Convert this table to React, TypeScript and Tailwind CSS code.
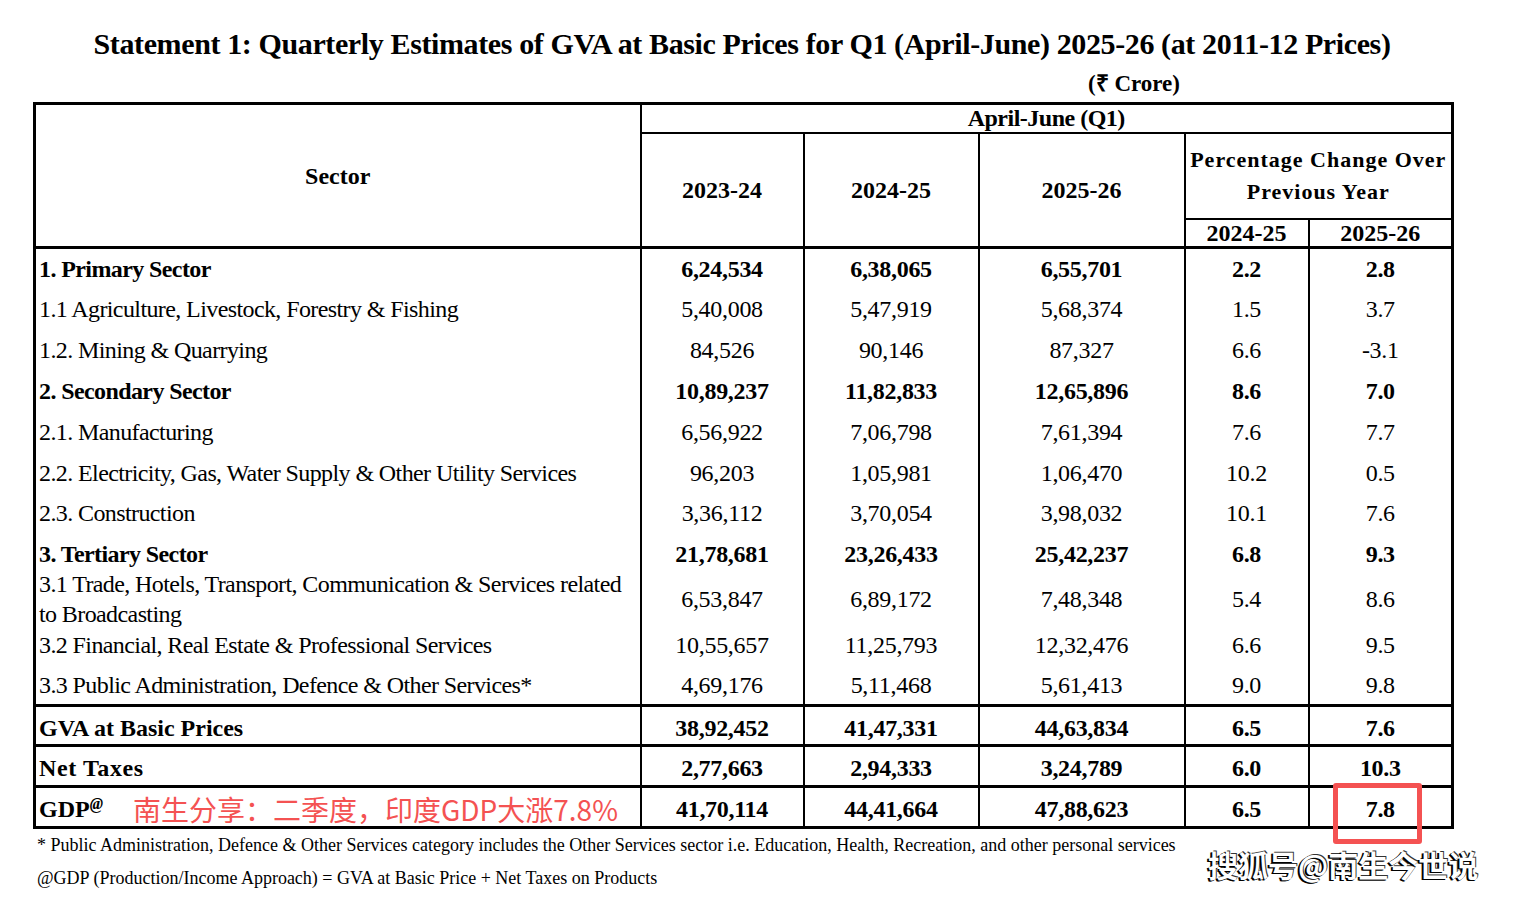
import React from "react";

type Row = {
  label: React.ReactNode;
  bold?: boolean;
  values: string[];
  h: string;
};

const rows: Row[] = [
  { label: "1. Primary Sector", bold: true, values: ["6,24,534", "6,38,065", "6,55,701", "2.2", "2.8"], h: "h-[41px]" },
  { label: "1.1 Agriculture, Livestock, Forestry & Fishing", values: ["5,40,008", "5,47,919", "5,68,374", "1.5", "3.7"], h: "h-[41px]" },
  { label: "1.2. Mining & Quarrying", values: ["84,526", "90,146", "87,327", "6.6", "-3.1"], h: "h-[41px]" },
  { label: "2. Secondary Sector", bold: true, values: ["10,89,237", "11,82,833", "12,65,896", "8.6", "7.0"], h: "h-[41px]" },
  { label: "2.1. Manufacturing", values: ["6,56,922", "7,06,798", "7,61,394", "7.6", "7.7"], h: "h-[41px]" },
  { label: "2.2. Electricity, Gas, Water Supply & Other Utility Services", values: ["96,203", "1,05,981", "1,06,470", "10.2", "0.5"], h: "h-[40px]" },
  { label: "2.3. Construction", values: ["3,36,112", "3,70,054", "3,98,032", "10.1", "7.6"], h: "h-[41px]" },
  { label: "3. Tertiary Sector", bold: true, values: ["21,78,681", "23,26,433", "25,42,237", "6.8", "9.3"], h: "h-[40px]" },
  {
    label: (
      <div className="-my-[5px] leading-[30px]">
        3.1 Trade, Hotels, Transport, Communication &amp; Services related
        <br />
        to Broadcasting
      </div>
    ),
    values: ["6,53,847", "6,89,172", "7,48,348", "5.4", "8.6"],
    h: "h-[50px]",
  },
  { label: "3.2 Financial, Real Estate & Professional Services", values: ["10,55,657", "11,25,793", "12,32,476", "6.6", "9.5"], h: "h-[42px]" },
  { label: "3.3 Public Administration, Defence & Other Services*", values: ["4,69,176", "5,11,468", "5,61,413", "9.0", "9.8"], h: "h-[40px]" },
];

const totals: Row[] = [
  { label: "GVA at Basic Prices", bold: true, values: ["38,92,452", "41,47,331", "44,63,834", "6.5", "7.6"], h: "h-[40px]" },
  { label: "Net Taxes", bold: true, values: ["2,77,663", "2,94,333", "3,24,789", "6.0", "10.3"], h: "h-[41px]" },
];

const serif = "font-['Liberation_Serif','Times_New_Roman',serif]";

export default function App() {
  return (
    <div className={`min-h-[898px] w-full bg-white text-black ${serif}`}>
      <div className="relative ml-[33px] w-[1418px]">
        <h1 className="pt-[26px] text-center text-[30px] leading-[36px] font-bold tracking-[-0.38px]">
          Statement 1: Quarterly Estimates of GVA at Basic Prices for Q1 (April-June) 2025-26 (at 2011-12 Prices)
        </h1>
        <div className="mt-[7px] flex h-[30px] items-center justify-end pr-[271px] text-[23px] font-bold">
          (₹ Crore)
        </div>

        <table className="mt-[3px] w-[1418px] table-fixed border-collapse border-[3px] border-black">
          <colgroup>
            <col className="w-[606px]" />
            <col className="w-[163px]" />
            <col className="w-[175px]" />
            <col className="w-[206px]" />
            <col className="w-[124px]" />
            <col className="w-[144px]" />
          </colgroup>
          <thead className="text-[24px] font-bold">
            <tr className="h-[29px]">
              <th rowSpan={3} className="border-r-2 border-b-[3px] border-black font-bold">
                Sector
              </th>
              <th colSpan={5} className="border-b-2 border-black font-bold leading-[26px] tracking-[-0.5px]">
                April-June (Q1)
              </th>
            </tr>
            <tr className="h-[86px]">
              <th rowSpan={2} className="border-r-2 border-b-[3px] border-black font-bold">2023-24</th>
              <th rowSpan={2} className="border-r-2 border-b-[3px] border-black font-bold">2024-25</th>
              <th rowSpan={2} className="border-r-2 border-b-[3px] border-black font-bold">2025-26</th>
              <th colSpan={2} className="border-b-2 border-black text-[22px] font-bold leading-[32px] tracking-[1px]">
                Percentage Change Over
                <br />
                Previous Year
              </th>
            </tr>
            <tr className="h-[29px]">
              <th className="border-r-2 border-b-[3px] border-black font-bold leading-[26px]">2024-25</th>
              <th className="border-b-[3px] border-black font-bold leading-[26px]">2025-26</th>
            </tr>
          </thead>
          <tbody className="text-[24px] leading-[30px]">
            {rows.map((r, i) => (
              <tr key={i} className={r.h}>
                <td className={`border-r-2 border-black pl-[3px] tracking-[-0.6px] ${r.bold ? "font-bold" : ""}`}>
                  {r.label}
                </td>
                {r.values.map((v, j) => (
                  <td
                    key={j}
                    className={`text-center tracking-[-0.3px] ${j < 4 ? "border-r-2 border-black" : ""} ${r.bold ? "font-bold" : ""}`}
                  >
                    {v}
                  </td>
                ))}
              </tr>
            ))}
            {totals.map((r, i) => (
              <tr key={`t${i}`} className={`${r.h} border-t-[3px] border-black font-bold`}>
                <td className={`border-r-2 border-black pt-[4px] pl-[3px] ${i === 1 ? "tracking-[0.6px]" : ""}`}>{r.label}</td>
                {r.values.map((v, j) => (
                  <td key={j} className={`pt-[4px] text-center tracking-[-0.3px] ${j < 4 ? "border-r-2 border-black" : ""}`}>
                    {v}
                  </td>
                ))}
              </tr>
            ))}
            <tr className="h-[41px] border-t-[3px] border-black font-bold">
              <td className="border-r-2 border-black pt-[4px] pl-[3px]">
                <div className="flex h-[30px] items-center">
                  <span>
                    GDP<sup className="text-[16px] italic">@</sup>
                  </span>
                  <span className="ml-[30px] font-['Noto_Sans_CJK_SC',sans-serif] text-[28px] leading-[30px] font-normal text-[#f45252]">
                    南生分享：二季度，印度GDP大涨7.8%
                  </span>
                </div>
              </td>
              {["41,70,114", "44,41,664", "47,88,623", "6.5", "7.8"].map((v, j) => (
                <td key={j} className={`pt-[4px] text-center tracking-[-0.3px] ${j < 4 ? "border-r-2 border-black" : ""}`}>
                  {v}
                </td>
              ))}
            </tr>
          </tbody>
        </table>

        <div className="mt-[5px] pl-[4px] text-[18px] leading-[22px]">
          * Public Administration, Defence &amp; Other Services category includes the Other Services sector i.e. Education, Health, Recreation, and other personal services
        </div>
        <div className="mt-[11px] pl-[4px] text-[18px] leading-[22px]">
          @GDP (Production/Income Approach) = GVA at Basic Price + Net Taxes on Products
        </div>

        <div className="absolute left-[1300px] top-[783px] h-[61px] w-[89px] rounded-[3px] border-[5px] border-[#f45252]" />
        <div className="absolute left-[1175px] top-[846px] whitespace-nowrap font-['Noto_Sans_CJK_SC',sans-serif] text-[30px] leading-[36px] font-bold text-white [text-shadow:-1px_1px_0_#000,-2px_1px_0_#000,1px_-1px_0_#333]">
          搜狐号@南生今世说
        </div>
      </div>
    </div>
  );
}
